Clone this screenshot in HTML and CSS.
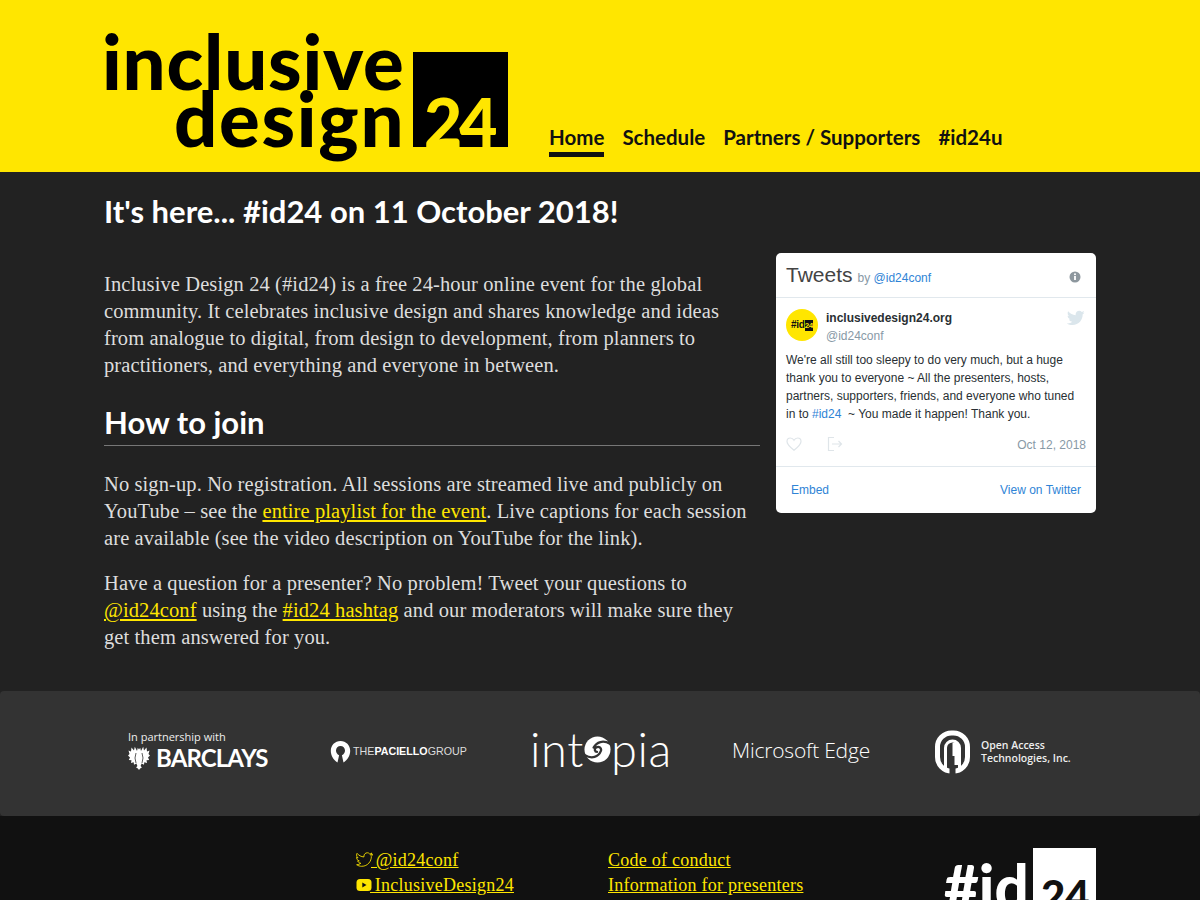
FILE: index.html
```html
<!DOCTYPE html>
<html lang="en">
<head>
    <meta charset="UTF-8">
    <meta name="viewport" content="width=device-width, initial-scale=1.0">
    <title>Inclusive Design 24</title>
    <link rel="stylesheet" href="styles.css">
</head>
<body>
    <header class="site-header">
        <div class="wrap header-inner">
            <a class="logo" href="#">
                <span class="logo-top">inclusive</span>
                <span class="logo-bottom">design</span>
                <span class="logo-box">24</span>
            </a>
            <nav class="main-nav">
                <a class="active" href="#">Home</a>
                <a href="#">Schedule</a>
                <a href="#">Partners / Supporters</a>
                <a href="#">#id24u</a>
            </nav>
        </div>
    </header>

    <main class="wrap">
        <h1>It's here... #id24 on 11 October 2018!</h1>
        <div class="columns">
            <div class="intro">
                <p>Inclusive Design 24 (#id24) is a free 24-hour online event for the global community. It celebrates inclusive design and shares knowledge and ideas from analogue to digital, from design to development, from planners to practitioners, and everything and everyone in between.</p>
                <h2>How to join</h2>
                <p>No sign-up. No registration. All sessions are streamed live and publicly on YouTube – see the <a href="#">entire playlist for the event</a>. Live captions for each session are available (see the video description on YouTube for the link).</p>
                <p>Have a question for a presenter? No problem! Tweet your questions to <a href="#">@id24conf</a> using the <a href="#">#id24 hashtag</a> and our moderators will make sure they get them answered for you.</p>
            </div>

            <aside class="tweets">
                <div class="tweets-head">
                    <span class="tweets-title">Tweets</span>
                    <span class="tweets-by">by <a href="#">@id24conf</a></span>
                    <svg class="info" viewBox="0 0 12 12" width="12" height="12"><circle cx="6" cy="6" r="5.5" fill="#8d979e"/><rect x="5.1" y="5" width="1.8" height="4" fill="#fff"/><circle cx="6" cy="3.3" r="1" fill="#fff"/></svg>
                </div>
                <div class="tweet">
                    <div class="tweet-author">
                        <span class="avatar">#id<b>24</b></span>
                        <div class="names">
                            <strong>inclusivedesign24.org</strong>
                            <span>@id24conf</span>
                        </div>
                        <svg class="bird" viewBox="0 0 24 24" width="18" height="18"><path fill="#dbe6ec" d="M23.6 4.6c-.9.4-1.800.6-2.800.8 1-.6 1.800-1.500 2.100-2.700-.9.600-2 1-3.100 1.200C18.900 2.900 17.600 2.300 16.300 2.300c-2.700 0-4.800 2.200-4.800 4.800 0 .4 0 .8.100 1.100C7.500 8 3.900 6.100 1.500 3.100 1.100 3.800.9 4.600.9 5.500c0 1.700.9 3.200 2.100 4-.8 0-1.500-.2-2.200-.6v.1c0 2.300 1.700 4.300 3.900 4.700-.7.200-1.500.2-2.200.1.600 1.900 2.400 3.300 4.500 3.300-1.700 1.300-3.700 2.100-6 2.100-.4 0-.8 0-1.200-.1 2.100 1.400 4.700 2.200 7.400 2.200 8.900 0 13.700-7.400 13.700-13.700v-.6c1-.7 1.800-1.500 2.500-2.500z"/></svg>
                    </div>
                    <p class="tweet-text">We're all still too sleepy to do very much, but a huge thank you to everyone ~ All the presenters, hosts, partners, supporters, friends, and everyone who tuned in to <a href="#">#id24</a>&nbsp; ~ You made it happen! Thank you.</p>
                    <div class="tweet-meta">
                        <svg viewBox="0 0 16 16" width="16" height="16"><path fill="none" stroke="#dfe5e9" stroke-width="1.200" d="M8 14.200C4 11 1 8.400 1 5.400 1 3.400 2.500 2 4.300 2 5.800 2 7.200 2.900 8 4.300 8.800 2.900 10.200 2 11.700 2 13.500 2 15 3.400 15 5.400c0 3-3 5.600-7 8.800z"/></svg>
                        <svg class="share" viewBox="0 0 16 16" width="16" height="16"><path fill="none" stroke="#dfe5e9" stroke-width="1.200" d="M7 1.500H1.500v13H7M5 8h9.500M11.500 5l3 3-3 3"/></svg>
                        <span class="tweet-date">Oct 12, 2018</span>
                    </div>
                </div>
                <div class="tweets-foot">
                    <a href="#">Embed</a>
                    <a href="#">View on Twitter</a>
                </div>
            </aside>
        </div>
    </main>

    <section class="partners">
        <div class="wrap partner-row">
            <div class="partner barclays">
                <span class="partner-with">In partnership with</span>
                <span class="barclays-name">
                    <svg viewBox="0 0 22 24" width="22" height="24"><path fill="#fff" d="M11 3.500 9.800 1.800 9 5 6.800 .8 6 4.500 3.500 1.500 3 5.500 .5 4.500 1.500 8 0 9.500 2 11.500.8 14l2.700.3L3 17l2.700-.7.300 2.500 2.400-1.300 1 2.500-1.400 1.500c1 .2 2 1 3 2.500 1-1.500 2-2.300 3-2.500l-1.400-1.500 1-2.500 2.400 1.300.3-2.500 2.700.7-.5-2.700 2.700-.3L20 11.500 22 9.500 20.500 8l1-3.500L19 5.500 18.500 1.500 16 4.500 15.200 .8 13 5 12.200 1.800z"/><path fill="none" stroke="#333" stroke-width=".8" d="M8 7 7 12l1 5M14 7l1 5-1 5"/></svg>
                    BARCLAYS
                </span>
            </div>
            <div class="partner tpg">
                <svg viewBox="0 0 20 22" width="21" height="22"><path fill="#fff" d="M10 0C4.500 0 .3 4.300.3 9.800c0 5 2.700 9.300 6.700 11.700l1.600-7.300C6.700 13.500 5.500 11.700 5.500 9.600 5.500 7 7.500 5 10 5s4.500 2 4.500 4.600c0 2.100-1.200 3.900-3.100 4.600l1.600 7.300c4-2.400 6.700-6.700 6.700-11.700C19.700 4.300 15.500 0 10 0z"/></svg>
                <span class="tpg-name">THE<b>PACIELLO</b>GROUP</span>
            </div>
            <div class="partner intopia">
                <span>int</span>
                <svg viewBox="0 0 28 28" width="27" height="27"><circle cx="14" cy="14" r="13.500" fill="#fff"/><path fill="none" stroke="#333" stroke-width="2.400" stroke-linecap="round" d="M1 20C8 24 15 22 17.500 15.500c1-3-2-5.500-5-3.500-2 1.500-1.500 4.500 1 4.500M27 8C20 4 13 6 10 12"/></svg>
                <span>pia</span>
            </div>
            <div class="partner edge">Microsoft Edge</div>
            <div class="partner oat">
                <svg viewBox="0 0 36 44" width="37" height="44"><rect x="3" y="3" width="30" height="38" rx="14" fill="none" stroke="#fff" stroke-width="5"/><rect x="15" y="35" width="6" height="9" fill="#333"/><path fill="none" stroke="#fff" stroke-width="3" d="M11 38V18a7 7 0 0 1 14 0v20"/><path fill="#fff" d="M18 13h6v22h-4V26h-2z"/></svg>
                <span class="oat-name">Open Access<br>Technologies, Inc.</span>
            </div>
        </div>
    </section>

    <footer class="site-footer">
        <div class="wrap footer-inner">
            <ul class="footer-links social">
                <li>
                    <svg viewBox="0 0 24 24" width="17" height="17"><path fill="none" stroke="#ffe600" stroke-width="1.200" d="M23 4.800c-.9.400-1.800.6-2.800.8 1-.6 1.800-1.500 2.100-2.700-.9.600-2 1-3.100 1.200C18.400 3 17.200 2.500 16 2.500c-2.700 0-4.800 2.200-4.800 4.800 0 .4 0 .8.100 1.100C7.300 8.200 3.800 6.300 1.500 3.300 1 4 .8 4.800.8 5.700c0 1.700.9 3.200 2.100 4-.8 0-1.500-.2-2.200-.6v.1c0 2.300 1.700 4.300 3.900 4.700-.7.200-1.500.2-2.200.1.600 1.900 2.400 3.300 4.500 3.300-1.700 1.300-3.700 2.100-6 2.100 2.100 1.400 4.500 2.200 7.100 2.200 8.900 0 13.700-7.400 13.700-13.700v-.6c.9-.7 1.600-1.500 2.300-2.500z"/></svg><a href="#">&nbsp;@id24conf</a>
                </li>
                <li>
                    <svg viewBox="0 0 16 16" width="16" height="16"><rect x=".5" y="2" width="15" height="12" rx="3.500" fill="#ffe600"/><path fill="#111" d="M6.300 5.500v5L10.500 8z"/></svg><a href="#">&nbsp;InclusiveDesign24</a>
                </li>
            </ul>
            <ul class="footer-links pages">
                <li><a href="#">Code of conduct</a></li>
                <li><a href="#">Information for presenters</a></li>
            </ul>
            <div class="footer-logo">
                <span class="hash">#id</span>
                <span class="box">24</span>
            </div>
        </div>
    </footer>
</body>
</html>
```

FILE: styles.css
```css
* {
    margin: 0;
    padding: 0;
    box-sizing: border-box;
}

html, body {
    height: 900px;
    overflow: hidden;
}

body {
    font-family: 'Liberation Serif', serif;
    font-size: 20.5px;
    line-height: 27px;
    letter-spacing: 0.1px;
    background: #222;
    color: #ddd;
}

a {
    color: #ffe600;
}

.wrap {
    width: 992px;
    margin: 0 auto;
}

/* header */
.site-header {
    height: 172px;
    background: #ffe600;
}

.header-inner {
    display: flex;
    height: 172px;
}

.logo {
    position: relative;
    display: block;
    width: 405px;
    height: 172px;
    margin-right: 40px;
    color: #000;
    text-decoration: none;
    font-family: 'Lato', sans-serif;
    font-weight: 900;
    font-size: 76px;
    line-height: 76px;
}

.logo-top {
    position: absolute;
    left: -2px;
    top: 23px;
    letter-spacing: 0.8px;
}

.logo-bottom {
    position: absolute;
    left: 70px;
    top: 80px;
    letter-spacing: 1.7px;
}

.logo-box {
    position: absolute;
    left: 309px;
    top: 52px;
    width: 95px;
    height: 95px;
    background: #000;
    color: #ffe600;
    font-size: 66px;
    line-height: 66px;
    font-weight: 900;
    padding: 37px 0 0 11px;
    letter-spacing: -3px;
    overflow: hidden;
}

.main-nav {
    display: flex;
    align-items: flex-end;
    gap: 18px;
    height: 157px;
    font-family: 'Lato', sans-serif;
    font-weight: 700;
    font-size: 20.5px;
    letter-spacing: 0;
}

.main-nav a {
    color: #111;
    text-decoration: none;
    padding-bottom: 1px;
    border-bottom: 5px solid transparent;
}

.main-nav a.active {
    border-bottom-color: #111;
}

/* main content */
h1 {
    font-family: 'Lato', sans-serif;
    font-size: 31px;
    line-height: 36px;
    font-weight: 700;
    letter-spacing: 0;
    color: #fff;
    padding-top: 21px;
    margin-bottom: 42px;
}

.columns {
    display: flex;
    gap: 16px;
    align-items: flex-start;
    height: 420px;
}

.intro {
    width: 656px;
    font-weight: 400;
}

.intro p {
    margin-bottom: 18px;
}

.intro > p:first-child {
    margin-bottom: 25px;
}

h2 {
    font-family: 'Lato', sans-serif;
    font-size: 31px;
    line-height: 36px;
    font-weight: 700;
    letter-spacing: 0;
    color: #fff;
    border-bottom: 1px solid #777;
    padding-bottom: 5px;
    margin-bottom: 25px;
}

/* twitter widget */
.tweets {
    width: 320px;
    height: 260px;
    margin-top: -18px;
    background: #fff;
    border-radius: 5px;
    font-family: 'Liberation Sans', sans-serif;
    letter-spacing: 0;
    color: #292f33;
    overflow: hidden;
}

.tweets a {
    color: #2f84d6;
    text-decoration: none;
}

.tweets-head {
    display: flex;
    align-items: baseline;
    height: 45px;
    padding: 8px 10px;
    border-bottom: 1px solid #e1e8ed;
    position: relative;
}

.tweets-title {
    font-size: 21px;
    line-height: 28px;
    color: #444;
}

.tweets-by {
    font-size: 12px;
    line-height: 18px;
    margin-left: 5px;
    color: #8899a6;
}

.info {
    position: absolute;
    right: 15px;
    top: 18px;
}

.tweet {
    height: 169px;
    padding: 11px 10px 0;
    border-bottom: 1px solid #e1e8ed;
}

.tweet-author {
    display: flex;
    position: relative;
}

.avatar {
    width: 32px;
    height: 32px;
    border-radius: 50%;
    background: #ffe600;
    color: #111;
    font-weight: 700;
    font-size: 10px;
    line-height: 32px;
    text-align: center;
    margin-right: 8px;
    letter-spacing: -0.3px;
    white-space: nowrap;
}

.avatar b {
    background: #111;
    color: #ffe600;
    font-size: 8px;
    padding: 1px 0;
}

.names strong {
    display: block;
    font-size: 12px;
    line-height: 18px;
}

.names span {
    display: block;
    font-size: 12px;
    line-height: 18px;
    color: #8899a6;
}

.bird {
    position: absolute;
    right: 1px;
    top: 0;
}

.tweet-text {
    font-size: 12px;
    line-height: 18px;
    margin-top: 6px;
}

.tweet-meta {
    display: flex;
    align-items: center;
    margin-top: 12px;
    height: 18px;
}

.share {
    margin-left: 25px;
}

.tweet-date {
    margin-left: auto;
    margin-top: 3px;
    font-size: 12px;
    color: #8899a6;
}

.tweets-foot {
    display: flex;
    justify-content: space-between;
    padding: 14px 15px;
    font-size: 12px;
    line-height: 18px;
}

/* partners band */
.partners {
    height: 125px;
    background: #333;
    border-radius: 4px;
}

.partner-row {
    display: flex;
    align-items: center;
    height: 125px;
    color: #fff;
    font-family: 'Open Sans', sans-serif;
    letter-spacing: 0;
    position: relative;
}

.partner {
    position: absolute;
    display: flex;
    align-items: center;
    white-space: nowrap;
}

.barclays {
    left: 24px;
    top: 39px;
    display: block;
}

.partner-with {
    display: block;
    font-size: 11px;
    line-height: 14px;
    color: #eee;
}

.barclays-name {
    display: flex;
    align-items: center;
    gap: 6px;
    font-family: 'Lato', sans-serif;
    font-weight: 700;
    font-size: 24px;
    line-height: 28px;
    letter-spacing: -0.9px;
}

.tpg {
    left: 226px;
    top: 47px;
    gap: 2px;
}

.tpg-name {
    font-family: 'Liberation Sans', sans-serif;
    font-size: 10.7px;
    color: #ddd;
}

.tpg-name b {
    color: #fff;
}

.intopia {
    left: 426px;
    top: 28px;
    font-family: 'Lato', sans-serif;
    font-weight: 300;
    font-size: 47px;
    line-height: 60px;
    letter-spacing: 0.6px;
}

.edge {
    left: 628px;
    top: 44px;
    font-size: 21px;
    line-height: 30px;
    font-weight: 300;
    letter-spacing: -0.2px;
}

.oat {
    left: 830px;
    top: 39px;
    gap: 10px;
}

.oat-name {
    font-size: 10.5px;
    line-height: 13px;
    font-weight: 600;
    color: #eee;
}

/* footer */
.site-footer {
    background: #111;
    height: 180px;
    padding-top: 32px;
}

.footer-inner {
    display: flex;
    position: relative;
}

.footer-links {
    list-style: none;
    font-size: 18px;
    line-height: 25px;
    letter-spacing: 0.25px;
}

.footer-links svg {
    vertical-align: -2px;
    margin-right: -2px;
}

.social {
    margin-left: 252px;
    width: 252px;
}

.footer-logo {
    position: absolute;
    left: 840px;
    top: 0;
    width: 152px;
    display: flex;
    justify-content: space-between;
    font-family: 'Lato', sans-serif;
    font-weight: 900;
    letter-spacing: 0;
    color: #fff;
}

.hash {
    font-size: 60px;
    line-height: 60px;
    margin-top: 8px;
}

.box {
    width: 63px;
    height: 90px;
    background: #fff;
    color: #111;
    font-size: 42px;
    line-height: 42px;
    padding: 26px 0 0 8px;
}
```
